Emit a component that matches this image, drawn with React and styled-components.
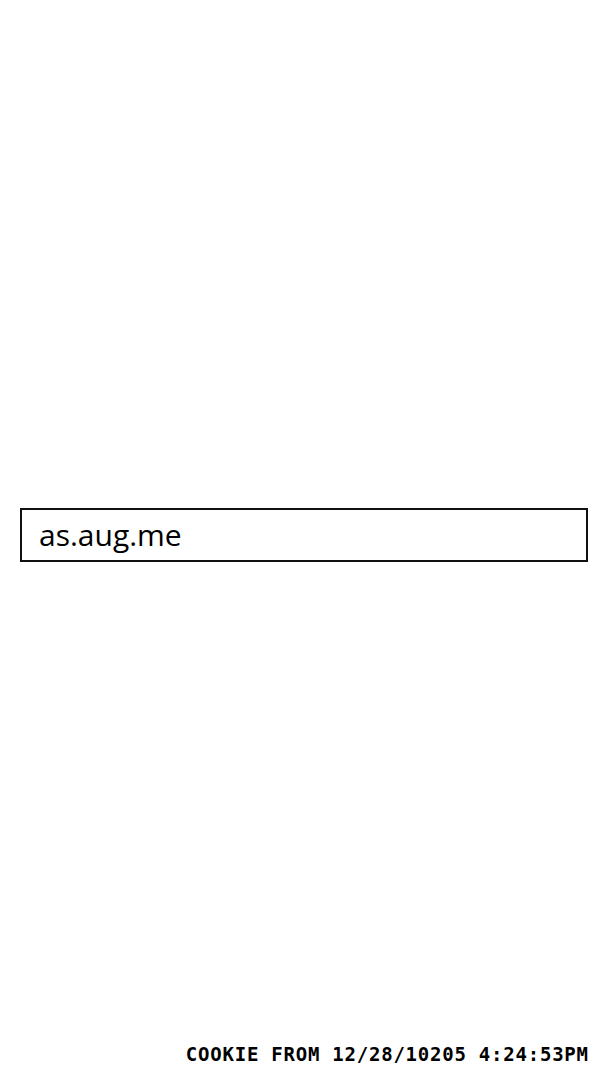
import React from "react";
import styled, { createGlobalStyle } from "styled-components";

const Global = createGlobalStyle`
	*, *::before, *::after { box-sizing: border-box; margin: 0; padding: 0; }
	html, body { height: 100%; }
	body { background: #fff; color: #000; font-family: "Open Sans", sans-serif; }
`;

const Page = styled.div`
	display: flex;
	flex-direction: column;
	min-height: 100vh;
	padding: 0 20px;
`;

const Center = styled.main`
	flex: 1;
	display: flex;
	align-items: center;
	padding-top: 24px;
`;

const Field = styled.input`
	width: 100%;
	height: 54px;
	border: 2px solid #111;
	padding: 0 17px;
	font-family: "Open Sans", "Noto Sans", sans-serif;
	font-size: 30px;
	color: #000;
	background: #fff;
	outline: none;
	border-radius: 0;
`;

const Footer = styled.footer`
	display: flex;
	justify-content: flex-end;
	padding-bottom: 16px;
	margin-right: -0.77px;
	font-family: "DejaVu Sans Mono", monospace;
	font-weight: 700;
	font-size: 19px;
	letter-spacing: 0.77px;
	line-height: 1;
	text-transform: uppercase;
`;

const App = () => (
	<>
		<Global />
		<Page>
			<Center>
				<Field defaultValue="as.aug.me" spellCheck={false} />
			</Center>
			<Footer>Cookie from 12/28/10205 4:24:53PM</Footer>
		</Page>
	</>
);

export default App;
